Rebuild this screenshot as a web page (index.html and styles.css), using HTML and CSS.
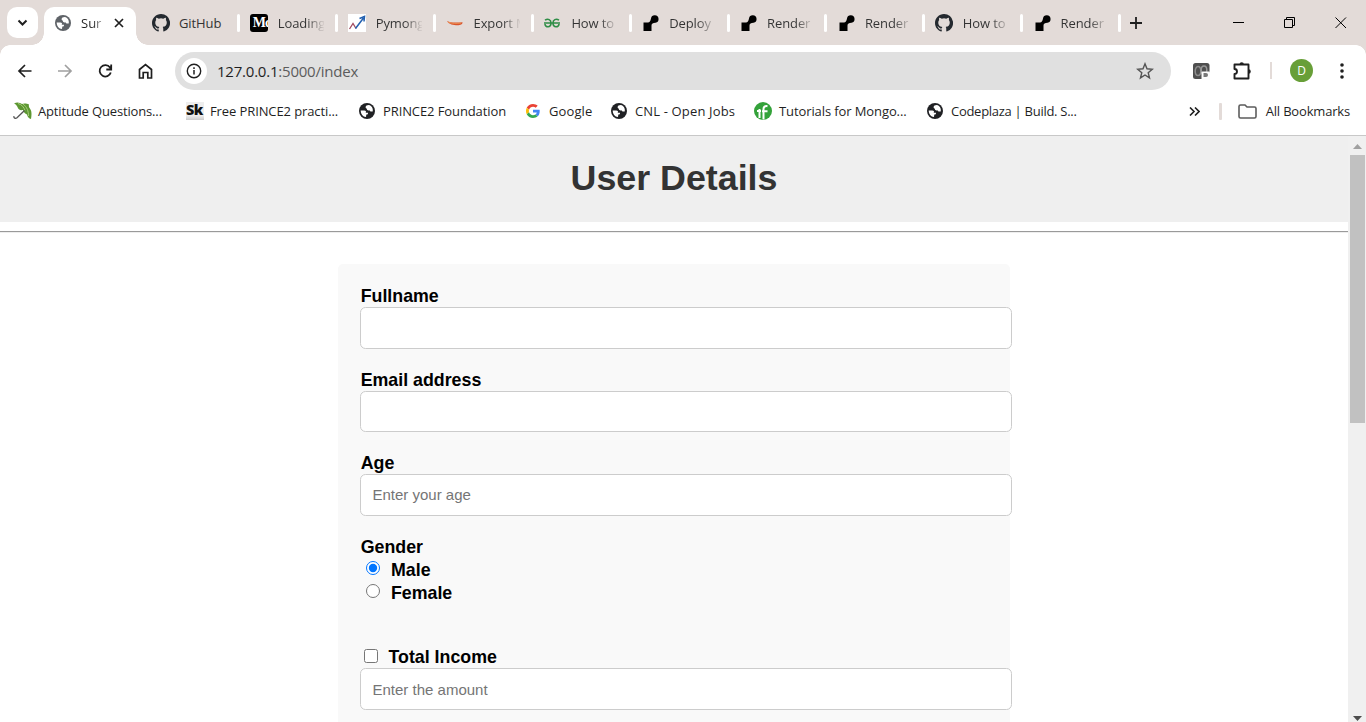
FILE: index.html
```html
<!DOCTYPE html>
<html lang="en">
<head>
<meta charset="utf-8">
<title>User Details</title>
<link rel="stylesheet" href="styles.css">
</head>
<body>
<svg class="defs" width="0" height="0" aria-hidden="true">
  <symbol id="globe" viewBox="0 0 16 16"><circle cx="8" cy="8" r="8" fill="currentColor"/><path d="M1.700 7.500h3.600c1.700 0 2.200 1.400 1.300 2.200H9c.2 1.400-.5 1.700-1.700 1.900l-.3 2.500C3.800 13.700 1.800 11 1.700 7.500zM9.800 2C8 2 6.600 2.700 6.600 4.200c0 1.100 1.300 1 1.300 1.900 0 1 .7 1.300 1.700 1.300h1.300c.2 1.200 1.300 1.400 2.800 1.100C14.500 5.500 12.500 2.600 9.800 2z" fill="#fff"/></symbol>
  <symbol id="github" viewBox="0 0 16 16"><path fill="#24292f" d="M8 0C3.580 0 0 3.580 0 8c0 3.540 2.290 6.530 5.470 7.590.4.070.55-.17.55-.38v-1.490c-2.230.48-2.690-.94-2.690-.94-.36-.93-.89-1.170-.89-1.170-.73-.5.050-.49.050-.49.800.06 1.230.83 1.230.83.720 1.230 1.880.87 2.330.66.070-.52.280-.87.510-1.070-1.780-.2-3.640-.89-3.640-3.950 0-.87.310-1.590.82-2.150-.08-.2-.36-1.020.080-2.120 0 0 .67-.21 2.200.82a7.600 7.600 0 0 1 4 0c1.530-1.040 2.200-.82 2.200-.82.440 1.100.160 1.920.080 2.120.510.560.820 1.270.820 2.150 0 3.070-1.870 3.750-3.650 3.950.290.250.540.730.540 1.480v2.200c0 .21.150.46.550.38A8 8 0 0 0 8 0z"/></symbol>
  <symbol id="render" viewBox="0 0 18 18"><path d="M2.500 8.500h4.500c1.500 0 2.500-1.500 3-4a3.800 3.800 0 1 1 4.500 4.300c-2.500.2-4 .7-4 2.700V17h-8z" fill="#000"/></symbol>
</svg>

<div class="tabstrip">
  <div class="tab-search"><svg width="11" height="8" viewBox="0 0 11 8"><path d="M1.500 1.500l4 4 4-4" fill="none" stroke="#1f1f1f" stroke-width="2"/></svg></div>
  <div class="tab-active">
    <svg class="fav-globe" width="16" height="16"><use href="#globe"/></svg>
    <span class="active-label">Sur</span>
    <svg class="tab-close" width="10" height="10" viewBox="0 0 10 10"><path d="M1 1l8 8M9 1l-8 8" stroke="#1f1f1f" stroke-width="1.700"/></svg>
  </div>
  <div class="tabs">
    <div class="tab"><svg class="fav" viewBox="0 0 18 18"><use href="#github"/></svg><span class="label full">GitHub</span></div>
    <div class="tab"><span class="fav medium">Mc</span><span class="label">Loading</span></div>
    <div class="tab"><svg class="fav" viewBox="0 0 18 18"><path d="M0 0h18v18H0z" fill="#fff"/><path d="M1.500 15L5 9.500l3 5" fill="none" stroke="#a34b61" stroke-width="1.300"/><path d="M7.500 14.500L15.500 4M11.500 4.500l5-2-.5 5" fill="none" stroke="#2461b0" stroke-width="1.500"/></svg><span class="label">Pymong</span></div>
    <div class="tab"><svg class="fav" viewBox="0 0 18 18"><path d="M1 7c4 2 9 1.800 15.500 1.200.3 2-2 3-5 3-4 0-8.500-.7-10.500-4.200z" fill="#d9542c"/><path d="M2 8c4 1.800 9 1.700 13 1" fill="none" stroke="#f3a35e" stroke-width=".7"/></svg><span class="label">Export M</span></div>
    <div class="tab"><svg class="fav" viewBox="0 0 18 18"><path d="M1 9h16M2 6.200c3-2 6-.5 6 2.800 0 5-6 4.500-6 1M16 6.200c-3-2-6-.5-6 2.800 0 5 6 4.500 6 1" fill="none" stroke="#2f8d46" stroke-width="1.600"/></svg><span class="label">How to</span></div>
    <div class="tab"><svg class="fav"><use href="#render"/></svg><span class="label">Deploy</span></div>
    <div class="tab"><svg class="fav"><use href="#render"/></svg><span class="label">Render</span></div>
    <div class="tab"><svg class="fav"><use href="#render"/></svg><span class="label">Render</span></div>
    <div class="tab"><svg class="fav" viewBox="0 0 18 18"><use href="#github"/></svg><span class="label">How to</span></div>
    <div class="tab"><svg class="fav"><use href="#render"/></svg><span class="label">Render</span></div>
  </div>
  <svg class="new-tab" width="12" height="12" viewBox="0 0 12 12"><path d="M6 0v12M0 6h12" stroke="#1f1f1f" stroke-width="1.800"/></svg>
  <div class="window-controls">
    <svg width="12" height="12" viewBox="0 0 12 12"><path d="M0 5.500h11" stroke="#000"/></svg>
    <svg width="12" height="12" viewBox="0 0 12 12"><path d="M.5 2.500h8v8h-8zM2.500 2.500v-2h8v8h-2" fill="none" stroke="#000"/></svg>
    <svg width="12" height="12" viewBox="0 0 12 12"><path d="M.5.5l10.500 10.500M11 .5L.5 11" stroke="#000"/></svg>
  </div>
</div>

<div class="toolbar">
  <div class="nav">
    <svg width="16" height="16" viewBox="0 0 16 16"><path d="M14.500 8H2.500M8 2L2 8l6 6" fill="none" stroke="#1f1f1f" stroke-width="1.700"/></svg>
    <svg width="16" height="16" viewBox="0 0 16 16"><path d="M1 8h12.500M8 2l6 6-6 6" fill="none" stroke="#a0a0a0" stroke-width="1.700"/></svg>
    <svg width="16" height="16" viewBox="0 0 16 16"><path d="M13.800 9.500A5.700 5.700 0 1 1 13 4.500L14.200 6.200M14.200 1.500v5H9.300" fill="none" stroke="#1f1f1f" stroke-width="1.800"/></svg>
    <svg width="16" height="16" viewBox="0 0 16 16"><path d="M2.500 15V6.500l6-5 6 5V15h-3.700V9.500H6.200V15z" fill="none" stroke="#1f1f1f" stroke-width="1.700"/></svg>
  </div>
  <div class="omnibox">
    <div class="site-info"><svg width="16" height="16" viewBox="0 0 16 16"><circle cx="8" cy="8" r="6.700" fill="none" stroke="#1f1f1f" stroke-width="1.400"/><path d="M8 7v4.500M8 4.300v1.600" stroke="#1f1f1f" stroke-width="1.500"/></svg></div>
    <span class="url"><span class="host">127.0.0.1</span>:5000/index</span>
    <svg class="star" width="18" height="18" viewBox="0 0 18 18"><path d="M9 1.800l2 5 5.300.4-4.100 3.500 1.300 5.200L9 13l-4.500 2.900 1.300-5.200-4.100-3.500L7 6.800z" fill="none" stroke="#555" stroke-width="1.400"/></svg>
  </div>
  <svg class="ext" width="18" height="18" viewBox="0 0 18 18"><rect x="1" y="1" width="16.500" height="16" rx="2.500" fill="#4f4f4f"/><ellipse cx="6" cy="9" rx="2.800" ry="4.500" fill="none" stroke="#8d8d8d" stroke-width="1.500"/><ellipse cx="12" cy="8" rx="2.800" ry="4" fill="none" stroke="#999" stroke-width="1.500"/><rect x="9.500" y="9.500" width="8.500" height="8.500" rx="1" fill="#fafafa"/><path d="M11.500 11h2.500a2 2 0 0 1 0 4h-2.500z" fill="#777"/></svg>
  <svg class="puzzle" width="20" height="20" viewBox="0 0 20 20"><path d="M2.500 3.500h14v14h-14v-4.500c3.300 0 3.300-5 0-5z" fill="none" stroke="#1f1f1f" stroke-width="1.900" stroke-linejoin="round"/><path d="M7.500 3.500a2.200 2.200 0 0 1 4.400 0zM16.500 8.200a2.300 2.300 0 0 1 0 4.600z" fill="#1f1f1f"/></svg>
  <span class="toolbar-sep"></span>
  <span class="avatar">D</span>
  <svg class="menu" width="4" height="16" viewBox="0 0 4 16"><g fill="#1f1f1f"><circle cx="2" cy="2" r="1.800"/><circle cx="2" cy="8" r="1.800"/><circle cx="2" cy="14" r="1.800"/></g></svg>
</div>

<div class="bookmarks">
  <div class="bm bm1"><svg width="19" height="18" viewBox="0 0 19 18"><path d="M1 1.500C4-.5 7 .5 9 2c2-1 5-.5 7 .5-.5 2 0 3 1.500 5C19 10 18.500 14 18 17c-2-.5-3.500-2-4-4.500-2-1-3.500-2.500-4-4.500C7 8.500 5 7.500 4.500 5 3.500 3 2.500 2.200 1 1.500z" fill="#5d9732"/><path d="M5 1.500c4 1 6 4 7 7M10 2c4 3 5.500 7 5.500 12" stroke="#a6cf79" stroke-width="1" fill="none"/><path d="M11.500 8.500L4 15.700c-1.500 1.300-3.500.5-3-1.500" stroke="#555" stroke-width="1.300" fill="none"/></svg><span>Aptitude Questions...</span></div>
  <div class="bm bm2"><span class="sk">Sk</span><span>Free PRINCE2 practi...</span></div>
  <div class="bm bm3"><svg width="16" height="16"><use href="#globe"/></svg><span>PRINCE2 Foundation</span></div>
  <div class="bm bm4"><svg width="14" height="14" viewBox="0 0 48 48"><path fill="#EA4335" d="M24 9.500c3.540 0 6.710 1.220 9.210 3.600l6.850-6.850C35.900 2.380 30.470 0 24 0 14.620 0 6.510 5.380 2.560 13.220l7.980 6.190C12.430 13.720 17.740 9.500 24 9.500z"/><path fill="#4285F4" d="M46.980 24.550c0-1.570-.15-3.090-.38-4.550H24v9.020h12.940c-.58 2.960-2.260 5.480-4.780 7.180l7.730 6c4.510-4.180 7.090-10.360 7.090-17.650z"/><path fill="#FBBC05" d="M10.530 28.590A14.500 14.500 0 0 1 9.770 24c0-1.600.27-3.140.76-4.590l-7.980-6.190A24 24 0 0 0 0 24c0 3.880.92 7.540 2.560 10.780z"/><path fill="#34A853" d="M24 48c6.480 0 11.930-2.130 15.890-5.810l-7.730-6c-2.150 1.450-4.920 2.300-8.160 2.300-6.260 0-11.570-4.220-13.470-9.910l-7.980 6.190C6.510 42.620 14.620 48 24 48z"/></svg><span>Google</span></div>
  <div class="bm bm5"><svg width="16" height="16"><use href="#globe"/></svg><span>CNL - Open Jobs</span></div>
  <div class="bm bm6"><svg width="18" height="18" viewBox="0 0 18 18"><circle cx="9" cy="9" r="9" fill="#34a23a"/><path d="M5.500 16V7M3 9h4M9.500 17.500V7c0-2.200 1.500-3.300 4-2.800M8 9.300h5.500" stroke="#fff" stroke-width="2" fill="none"/></svg><span>Tutorials for Mongo...</span></div>
  <div class="bm bm7"><svg width="16" height="16"><use href="#globe"/></svg><span>Codeplaza | Build. S...</span></div>
  <div class="bm-end">
    <svg width="11" height="9" viewBox="0 0 11 9"><path d="M1 .5l4 4-4 4M6 .5l4 4-4 4" fill="none" stroke="#1f1f1f" stroke-width="1.600"/></svg>
    <span class="bm-sep"></span>
    <svg class="folder" width="19" height="15" viewBox="0 0 19 15"><path d="M1 2.500Q1 1 2.500 1H7l2 2h7.500Q18 3 18 4.500v8q0 1.500-1.500 1.500h-14Q1 14 1 12.500z" fill="none" stroke="#5c5c5c" stroke-width="1.600"/></svg>
    <span class="all">All Bookmarks</span>
  </div>
</div>

<div class="viewport">
  <main class="page">
    <h1 class="title">User Details</h1>
    <div class="rule"></div>
    <form class="form">
      <div class="field"><label for="name">Fullname</label><input class="text" id="name" type="text"></div>
      <div class="field"><label for="email">Email address</label><input class="text" id="email" type="text"></div>
      <div class="field"><label for="age">Age</label><input class="text" id="age" type="text" placeholder="Enter your age"></div>
      <div class="gender">
        <label>Gender</label>
        <label class="choice"><input type="radio" name="gender" checked>Male</label>
        <label class="choice"><input type="radio" name="gender">Female</label>
      </div>
      <div class="field"><label class="check"><input type="checkbox">Total Income</label><input class="text amount" type="text" placeholder="Enter the amount"></div>
    </form>
  </main>
  <div class="scrollbar">
    <svg width="9" height="5" viewBox="0 0 9 5"><path d="M0 5l4.500-5L9 5z" fill="#a0a0a0"/></svg>
    <div class="thumb"></div>
    <svg class="down" width="9" height="5" viewBox="0 0 9 5"><path d="M0 0l4.500 5L9 0z" fill="#4d4d4d"/></svg>
  </div>
</div>
</body>
</html>
```
FILE: styles.css
```css
* { box-sizing: border-box; }
body {
  margin: 0;
  height: 722px;
  overflow: hidden;
  display: flex;
  flex-direction: column;
  background: #fff;
  font-family: "Open Sans", "Noto Sans", sans-serif;
  font-size: 13px;
  color: #1f1f1f;
}
svg { display: block; flex: none; }
.defs { position: absolute; }

.tabstrip { display: flex; height: 45px; flex: none; background: #e3dbd8; padding-left: 7px; }
.tab-search {
  width: 31px; height: 31px; margin-top: 7px;
  background: #fff; border-radius: 10px;
  display: flex; align-items: center; justify-content: center;
}
.tab-active {
  position: relative;
  width: 92px; margin: 7px 0 0 6px;
  padding: 0 12px 6px 11px;
  background: #fff; border-radius: 10px 10px 0 0;
  display: flex; align-items: center;
}
.tab-active::before, .tab-active::after {
  content: ""; position: absolute; bottom: 0; width: 12px; height: 12px;
}
.tab-active::before { left: -12px; background: radial-gradient(circle at 0 0, transparent 11.500px, #fff 12px); }
.tab-active::after { right: -12px; background: radial-gradient(circle at 100% 0, transparent 11.500px, #fff 12px); }
.fav-globe { color: #5f6368; }
.active-label {
  width: 22px; margin-left: 10px; white-space: nowrap;
  background: linear-gradient(90deg, #1f1f1f 50%, #bbb);
  -webkit-background-clip: text; color: transparent;
}
.tab-close { margin-left: auto; }
.tabs { display: flex; margin-left: 16px; padding-top: 1px; }
.tab { display: flex; align-items: center; width: 97.850px; padding-bottom: 1px; }
.tab::after { content: ""; width: 3px; height: 18px; border-radius: 2px; background: #fff; margin-left: auto; margin-right: 9.500px; }
.fav { width: 18px; height: 18px; flex: none; }
.medium {
  background: #000; color: #fff; border-radius: 3px; overflow: hidden;
  font: bold 14px/18px "Liberation Serif", serif; padding-left: 3px; letter-spacing: -1px;
}
.label {
  width: 46px; margin-left: 10px; overflow: hidden; white-space: nowrap; letter-spacing: -.1px;
  background: linear-gradient(90deg, #333 62%, #d8d0cd);
  -webkit-background-clip: text; color: transparent;
}
.label.full { background: none; color: #333; margin-left: 9px; }
.new-tab { margin: 17px 0 0 0; }
.window-controls { display: flex; gap: 39px; margin: 17px 19.500px 0 auto; }

.toolbar {
  display: flex; align-items: center; flex: none;
  height: 53px; padding: 0 0 2px 17px;
  background: radial-gradient(circle at 10px 10px, #fff 9.500px, #e3dbd8 10px) 0 0 / 10px 10px no-repeat,
    radial-gradient(circle at 0 10px, #fff 9.500px, #e3dbd8 10px) 100% 0 / 10px 10px no-repeat, #fff;
}
.nav { display: flex; gap: 24px; width: 158px; }
.omnibox {
  display: flex; align-items: center;
  width: 996px; height: 38px; border-radius: 19px;
  background: #e0e0e0; padding: 0 17px 0 6px;
}
.site-info { width: 26px; height: 26px; border-radius: 50%; background: #fff; display: flex; align-items: center; justify-content: center; }
.url { font-size: 15px; letter-spacing: -.22px; margin-left: 10px; color: #5c5c5c; }
.host { color: #1f1f1f; }
.star { margin-left: auto; }
.ext { margin-left: 21px; }
.puzzle { margin-left: 22px; }
.toolbar-sep { width: 2px; height: 17px; background: #e3dbd8; margin-left: 18px; }
.avatar {
  width: 23px; height: 23px; border-radius: 50%; margin-left: 18px;
  background: #689f38; color: #fff; font-size: 12px; line-height: 23px; text-align: center;
}
.menu { margin-left: 27px; }

.bookmarks { display: flex; align-items: center; height: 38px; flex: none; padding: 0 16px 11px 13px; border-bottom: 1px solid #c8c8c8; white-space: nowrap; }
.bm { display: flex; align-items: center; flex: none; color: #1f1f1f; }
.bm svg { color: #202124; }
.bm1 { width: 173px; gap: 6px; letter-spacing: -.15px; }
.bm2 { width: 173px; gap: 6px; letter-spacing: -.1px; }
.bm3 { width: 167px; gap: 8px; letter-spacing: -.1px; }
.bm4 { width: 85px; gap: 9px; letter-spacing: .1px; }
.bm5 { width: 143px; gap: 8px; letter-spacing: .15px; }
.bm6 { width: 173px; gap: 7px; letter-spacing: -.1px; }
.bm7 { gap: 8px; letter-spacing: -.28px; }
.sk { width: 18px; height: 18px; overflow: hidden; background: linear-gradient(#eee 75%, #ccc); font: 800 14.500px/15px "Open Sans", sans-serif; letter-spacing: -.6px; color: #111; }
.bm-end { display: flex; align-items: center; margin-left: auto; }
.bm-sep { width: 3px; height: 17px; margin-left: 19px; background: #e3dbd8; border-radius: 1px; }
.folder { margin-left: 16px; }
.all { margin-left: 9px; letter-spacing: -.18px; }

.viewport { display: flex; flex: 1; min-height: 0; font-family: "Liberation Sans", Arial, sans-serif; }
.page { width: 1348px; overflow: hidden; }
.title { margin: 0; height: 86px; background: #efefef; color: #333; text-align: center; font-size: 35.800px; line-height: 84px; }
.rule { height: 2px; margin-top: 9px; border-top: 1px solid #9a9a9a; border-bottom: 1px solid #eee; }
.form { width: 672px; height: 500px; margin: 31px 0 0 338px; padding: 22px 0 0 22px; background: #f9f9f9; border-radius: 5px; color: #000; }
.form label { display: block; height: 21px; line-height: 20px; font-size: 17.800px; font-weight: bold; padding-left: .7px; }
.field { height: 83.600px; }
.text {
  display: block; width: 652px; height: 41.600px; padding: 0 11.500px;
  border: 1px solid #ccc; border-radius: 5.500px; background: #fff;
  font: 15px "Liberation Sans", Arial, sans-serif;
}
.amount { padding-top: 1px; }
.gender { height: 110.200px; }
.form .choice, .form .check { display: flex; align-items: center; }
.form .choice { height: 23px; line-height: 23px; padding-top: 2px; }
.choice input { width: 14px; height: 14px; margin: 0 11px 5px 5.300px; }
.check input { width: 14px; height: 14px; margin: 0 10px 2px 3.800px; }
.scrollbar { width: 18px; display: flex; flex-direction: column; align-items: center; background: #f0f0f0; padding-top: 8px; }
.thumb { width: 15px; height: 268px; margin: 6px 0 0 1px; background: #c1c1c1; }
.down { margin-top: auto; margin-bottom: 1px; }
```
